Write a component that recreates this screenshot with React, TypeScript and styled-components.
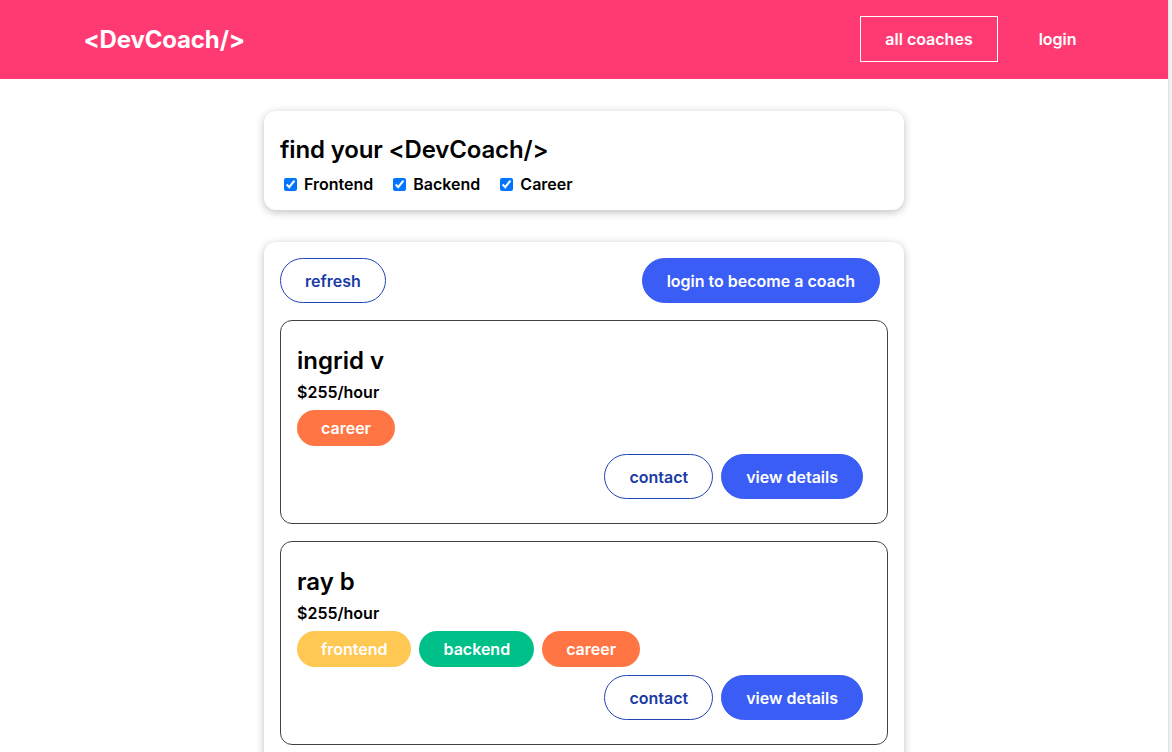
import React from "react";
import styled, { createGlobalStyle } from "styled-components";

const GlobalStyle = createGlobalStyle`
  * { box-sizing: border-box; }
  html { font-family: "Inter", "Noto Sans", sans-serif; background: #f1f1f1; }
  body { margin: 0; color: #000; }
  #root {
    margin-right: 4px;
    background: #fff;
    box-shadow: 1px 0 0 #e2e2e2;
    min-height: 100vh;
    overflow: hidden;
  }
`;

const Header = styled.header`
  height: 79px;
  background: #ff3a72;
  display: flex;
  align-items: center;
  justify-content: center;
`;

const Nav = styled.nav`
  width: 90%;
  display: flex;
  align-items: center;
  justify-content: space-between;
`;

const Logo = styled.h1`
  margin: 0;
  font-size: 24px;
  font-weight: 700;
  color: #fff;
  padding: 0 25px;
  letter-spacing: -0.15px;
`;

const NavList = styled.ul`
  list-style: none;
  margin: 0;
  padding: 0;
  display: flex;
  align-items: center;
`;

const NavLink = styled.a<{ $active?: boolean }>`
  display: block;
  margin: 0 8px;
  padding: 0 24px;
  height: 46px;
  line-height: 44px;
  border: 1px solid ${(p) => (p.$active ? "#fff" : "transparent")};
  color: #fff;
  font-size: 16px;
  font-weight: 600;
  text-decoration: none;
  margin-top: -1px;
`;

const Card = styled.section<{ $pb?: number }>`
  max-width: 640px;
  margin: 32px auto;
  padding: 16px 16px ${(p) => p.$pb ?? 16}px;
  border-radius: 12px;
  box-shadow: 0 2px 8px rgba(0, 0, 0, 0.26);
  background: #fff;
`;

const FilterTitle = styled.h2`
  margin: 8px 0 8px;
  font-size: 24px;
  line-height: 29px;
  font-weight: 600;
  letter-spacing: -0.15px;
`;

const FilterRow = styled.div`
  display: flex;
  align-items: center;
  height: 24px;
`;

const FilterOption = styled.span`
  display: inline-flex;
  align-items: center;
  margin-right: 16px;
`;

const Check = styled.input`
  margin: 3px 3px 3px 4px;
  width: 13px;
  height: 13px;
`;

const OptionLabel = styled.label`
  margin-left: 4px;
  font-size: 16px;
  font-weight: 600;
`;

const Controls = styled.div`
  display: flex;
  justify-content: space-between;
  align-items: center;
`;

const Button = styled.button<{ $variant?: "outline" | "flat" }>`
  height: 45px;
  padding: 0 24px;
  margin-right: 8px;
  border-radius: 30px;
  font-family: inherit;
  font-size: 16px;
  font-weight: 600;
  cursor: pointer;
  border: 1px solid ${(p) => (p.$variant === "outline" ? "#1f45b8" : "#3a5ef5")};
  background: ${(p) => (p.$variant === "outline" ? "#fff" : "#3a5ef5")};
  color: ${(p) => (p.$variant === "outline" ? "#1a3aa6" : "#fff")};
`;

const CoachList = styled.ul`
  list-style: none;
  margin: 0;
  padding: 0;
`;

const CoachItem = styled.li`
  margin: 17px 0 0;
  border: 1px solid #424242;
  border-radius: 12px;
  padding: 16px 16px 24px;
`;

const CoachName = styled.h3`
  margin: 9px 0 0;
  font-size: 24px;
  line-height: 29px;
  font-weight: 600;
`;

const Rate = styled.h4`
  margin: 8px 0 0;
  font-size: 16px;
  line-height: 19px;
  font-weight: 600;
`;

const Badges = styled.div`
  display: flex;
  gap: 8px;
  margin-top: 8px;
`;

const badgeColors: Record<string, string> = {
  frontend: "#ffc852",
  backend: "#00c08a",
  career: "#ff7544",
};

const Badge = styled.span<{ $area: string }>`
  display: inline-block;
  height: 36px;
  line-height: 36px;
  padding: 0 24px;
  border-radius: 30px;
  background: ${(p) => badgeColors[p.$area]};
  color: #fff;
  font-size: 16px;
  font-weight: 600;
`;

const Actions = styled.div`
  display: flex;
  justify-content: flex-end;
  margin-top: 8px;
`;

const coaches = [
  { name: "ingrid v", rate: 255, areas: ["career"] },
  { name: "ray b", rate: 255, areas: ["frontend", "backend", "career"] },
];

export default function App() {
  return (
    <>
      <GlobalStyle />
      <Header>
        <Nav>
          <Logo>&lt;DevCoach/&gt;</Logo>
          <NavList>
            <li>
              <NavLink $active>all coaches</NavLink>
            </li>
            <li>
              <NavLink>login</NavLink>
            </li>
          </NavList>
        </Nav>
      </Header>
      <Card $pb={14}>
        <FilterTitle>find your &lt;DevCoach/&gt;</FilterTitle>
        <FilterRow>
          {["Frontend", "Backend", "Career"].map((f) => (
            <FilterOption key={f}>
              <Check type="checkbox" id={f} defaultChecked />
              <OptionLabel htmlFor={f}>{f}</OptionLabel>
            </FilterOption>
          ))}
        </FilterRow>
      </Card>
      <Card>
        <Controls>
          <Button $variant="outline">refresh</Button>
          <Button>login to become a coach</Button>
        </Controls>
        <CoachList>
          {coaches.map((c) => (
            <CoachItem key={c.name}>
              <CoachName>{c.name}</CoachName>
              <Rate>${c.rate}/hour</Rate>
              <Badges>
                {c.areas.map((a) => (
                  <Badge key={a} $area={a}>
                    {a}
                  </Badge>
                ))}
              </Badges>
              <Actions>
                <Button $variant="outline">contact</Button>
                <Button>view details</Button>
              </Actions>
            </CoachItem>
          ))}
        </CoachList>
      </Card>
    </>
  );
}
